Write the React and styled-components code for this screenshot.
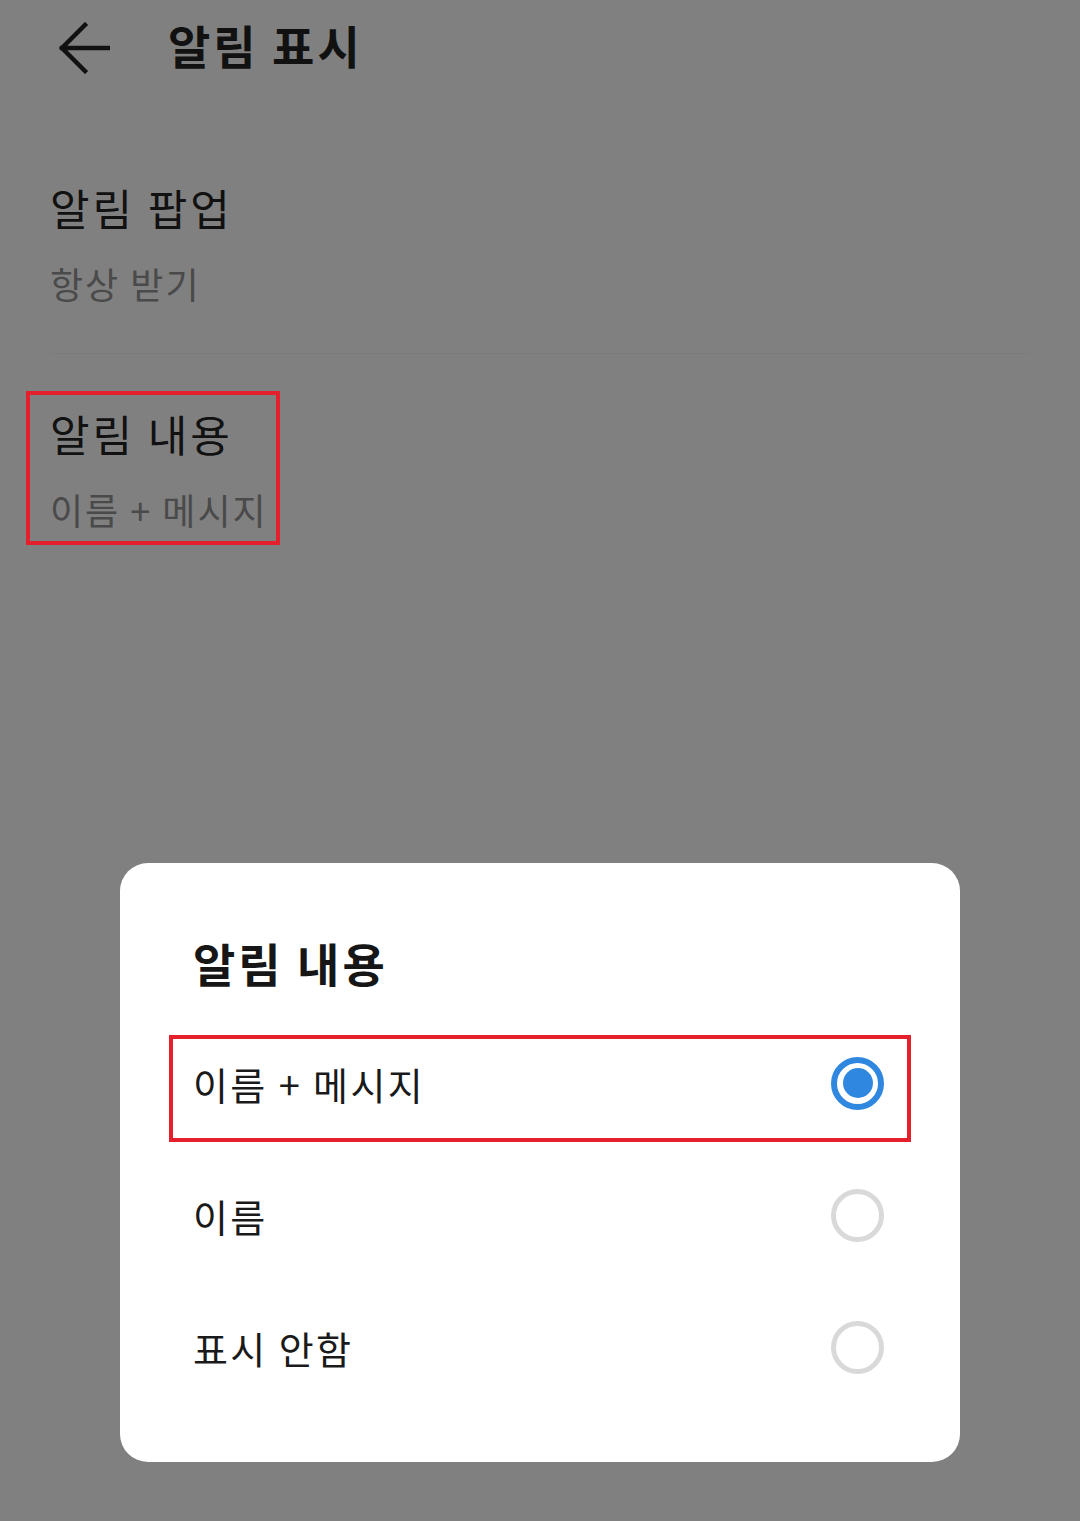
import React from "react";
import styled, { createGlobalStyle } from "styled-components";

const Global = createGlobalStyle`
  html, body { margin: 0; padding: 0; background: #808080; }
  body { font-family: "Noto Sans CJK KR", "Noto Sans", sans-serif; }
  * { box-sizing: border-box; }
`;

const Page = styled.div`
  position: relative;
  width: 1080px;
  height: 1521px;
  background: #808080;
  overflow: hidden;
`;

const Header = styled.header`
  display: flex;
  align-items: center;
  height: 95px;
  padding-left: 58px;
  gap: 58px;
`;

const BackButton = styled.button`
  display: flex;
  padding: 0;
  border: 0;
  background: none;
  color: #111;
`;

const HeaderTitle = styled.h1`
  margin: 0 0 8px;
  font-size: 46px;
  font-weight: 700;
  line-height: 60px;
  letter-spacing: 3px;
  color: #111;
`;

const List = styled.div`
  margin-top: 33px;
`;

const Item = styled.div`
  position: relative;
  margin: 0 50px;
  padding: 51px 0 45px;
  border-bottom: ${(p) => (p.$divider ? "1px solid #7b7b7b" : "none")};
`;

const ItemTitle = styled.div`
  font-size: 43px;
  line-height: 56px;
  letter-spacing: 3px;
  color: #111;
`;

const ItemSub = styled.div`
  margin-top: 23px;
  font-size: 36px;
  line-height: 50px;
  letter-spacing: 2px;
  color: #4a4a4a;
`;

const Annotation = styled.span`
  position: absolute;
  border: 4px solid #e3202b;
  pointer-events: none;
`;

const Overlay = styled.div`
  position: absolute;
  inset: 0;
  display: flex;
  justify-content: center;
  align-items: flex-end;
  padding-bottom: 59px;
`;

const Dialog = styled.div`
  width: 840px;
  background: #fff;
  border-radius: 28px;
  padding: 69px 76px 49px 73px;
`;

const DialogTitle = styled.h2`
  margin: 0 0 25px;
  font-size: 46px;
  font-weight: 700;
  line-height: 60px;
  letter-spacing: 3px;
  color: #161616;
`;

const Option = styled.div`
  position: relative;
  display: flex;
  align-items: center;
  justify-content: space-between;
  height: 132px;
`;

const OptionLabel = styled.span`
  font-size: 38px;
  letter-spacing: 2.4px;
  color: #1a1a1a;
`;

const Radio = styled.span`
  position: relative;
  width: 53px;
  height: 53px;
  border-radius: 50%;
  border: ${(p) => (p.$checked ? "6px solid #2f87df" : "5px solid #d9d9d9")};
  display: flex;
  align-items: center;
  justify-content: center;
  &::after {
    content: "";
    display: ${(p) => (p.$checked ? "block" : "none")};
    width: 30px;
    height: 30px;
    border-radius: 50%;
    background: #2f87df;
  }
`;

const ArrowIcon = () => (
  <svg width="52" height="52" viewBox="0 0 52 52" fill="none">
    <path
      d="M27 3 L4 26 L27 49 M4 26 H50"
      stroke="currentColor"
      strokeWidth="4.5"
      strokeLinecap="square"
      strokeLinejoin="miter"
    />
  </svg>
);

const options = [
  { label: "이름 + 메시지", checked: true, highlight: true },
  { label: "이름", checked: false },
  { label: "표시 안함", checked: false },
];

export default function App() {
  return (
    <Page>
      <Global />
      <Header>
        <BackButton aria-label="back">
          <ArrowIcon />
        </BackButton>
        <HeaderTitle>알림 표시</HeaderTitle>
      </Header>
      <List>
        <Item $divider>
          <ItemTitle>알림 팝업</ItemTitle>
          <ItemSub>항상 받기</ItemSub>
        </Item>
        <Item>
          <ItemTitle>알림 내용</ItemTitle>
          <ItemSub>이름 + 메시지</ItemSub>
          <Annotation style={{ left: -24, top: 37, width: 254, height: 154 }} />
        </Item>
      </List>
      <Overlay>
        <Dialog>
          <DialogTitle>알림 내용</DialogTitle>
          {options.map((o) => (
            <Option key={o.label}>
              <OptionLabel>{o.label}</OptionLabel>
              <Radio $checked={o.checked} />
              {o.highlight && (
                <Annotation style={{ left: -24, right: -27, top: 18, bottom: 7 }} />
              )}
            </Option>
          ))}
        </Dialog>
      </Overlay>
    </Page>
  );
}
